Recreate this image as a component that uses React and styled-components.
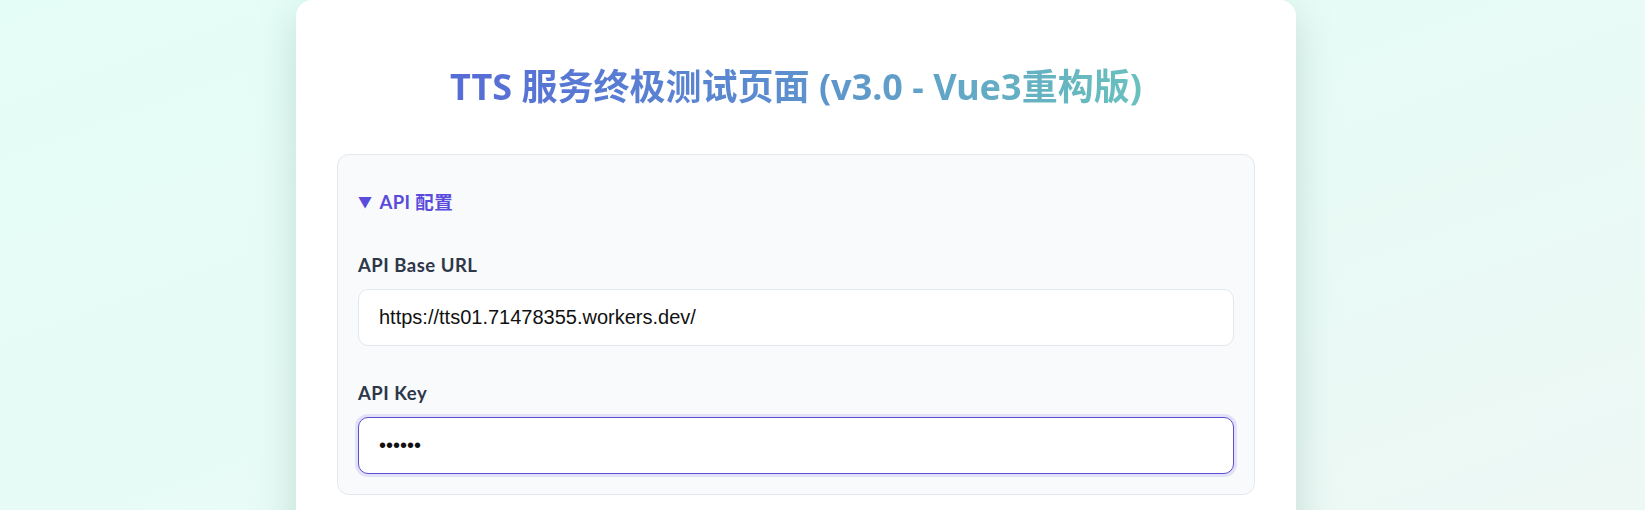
import React from 'react'
import styled, { createGlobalStyle, css } from 'styled-components'

const GlobalStyle = createGlobalStyle`
  html, body {
    margin: 0;
    padding: 0;
  }
  body {
    min-height: 510px;
    background: linear-gradient(160deg, #e5fdf7 0%, #e8fbf6 50%, #eef8f5 100%);
    font-family: "Noto Sans", "Noto Sans CJK SC", sans-serif;
    overflow: hidden;
  }
`

const Page = styled.div`
  display: flex;
  padding-left: 296px;
`

const Card = styled.main`
  width: 1000px;
  box-sizing: border-box;
  background: #ffffff;
  border-radius: 16px;
  padding: 62px 41px 40px;
  box-shadow: 0 12px 40px rgba(60, 120, 105, 0.22);
  min-height: 560px;
`

const Title = styled.h1`
  margin: 0 0 42px;
  text-align: center;
  font-family: "Noto Sans", "Noto Sans CJK SC", sans-serif;
  font-size: 36px;
  font-weight: 700;
  line-height: 50px;
  background: linear-gradient(90deg, #5460d8 0%, #5b8ad0 45%, #6dd1b8 100%);
  background-clip: text;
  -webkit-background-clip: text;
  color: transparent;
`

const Section = styled.details`
  background: #f8fafc;
  border: 1px solid #e2e8f0;
  border-radius: 12px;
  padding: 35px 20px 20px;
`

const Summary = styled.summary`
  list-style: none;
  cursor: pointer;
  display: flex;
  align-items: center;
  gap: 7px;
  font-family: Lato, "Noto Sans CJK SC", sans-serif;
  font-size: 18.5px;
  font-weight: 700;
  letter-spacing: 0.4px;
  line-height: 24px;
  color: #5a4bdc;
  margin-bottom: 39px;

  &::-webkit-details-marker {
    display: none;
  }
`

const Arrow = styled.span`
  font-size: 14px;
  line-height: 1;
`

const Field = styled.div`
  display: flex;
  flex-direction: column;
  gap: 12px;

  & + & {
    margin-top: 35px;
  }
`

const Label = styled.label`
  font-family: Lato, "Noto Sans CJK SC", sans-serif;
  font-size: 18.5px;
  font-weight: 700;
  letter-spacing: 0.5px;
  line-height: 24px;
  color: #2d3748;
`

const Input = styled.input`
  box-sizing: border-box;
  width: 100%;
  height: 57px;
  padding: 0 20px;
  font-family: "Liberation Sans", Arial, sans-serif;
  font-size: 20px;
  color: #111;
  background: #ffffff;
  border: 1px solid #e2e8f0;
  border-radius: 10px;
  outline: none;

  ${(p) =>
    p.$focused &&
    css`
      border-color: #5a4fcf;
      box-shadow: 0 0 0 3px rgba(102, 90, 230, 0.15);
    `}
`

export default function App() {
  return (
    <>
      <GlobalStyle />
      <Page>
        <Card>
          <Title>TTS 服务终极测试页面 (v3.0 - Vue3重构版)</Title>
          <Section open>
            <Summary>
              <Arrow>▼</Arrow>
              API 配置
            </Summary>
            <Field>
              <Label htmlFor="base-url">API Base URL</Label>
              <Input
                id="base-url"
                type="text"
                defaultValue="https://tts01.71478355.workers.dev/"
              />
            </Field>
            <Field>
              <Label htmlFor="api-key">API Key</Label>
              <Input
                id="api-key"
                type="password"
                defaultValue="123456"
                autoFocus
                $focused
              />
            </Field>
          </Section>
        </Card>
      </Page>
    </>
  )
}
